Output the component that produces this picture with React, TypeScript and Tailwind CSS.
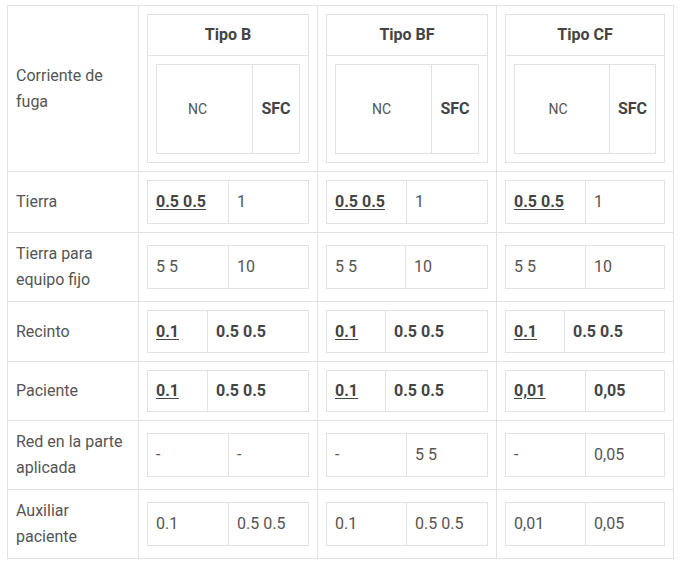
import React from "react";

type Cell = { t: string; b?: boolean; u?: boolean };
type Row = { label: string[]; lh: number; cols: { w: number; a: Cell; c: Cell }[] };

const B = "border border-[#e2e2e2]";

const rows: Row[] = [
  {
    label: ["Tierra"],
    lh: 26,
    cols: [
      { w: 81, a: { t: "0.5 0.5", b: true, u: true }, c: { t: "1" } },
      { w: 80, a: { t: "0.5 0.5", b: true, u: true }, c: { t: "1" } },
      { w: 80, a: { t: "0.5 0.5", b: true, u: true }, c: { t: "1" } },
    ],
  },
  {
    label: ["Tierra para", "equipo fijo"],
    lh: 26,
    cols: [
      { w: 81, a: { t: "5 5" }, c: { t: "10" } },
      { w: 79, a: { t: "5 5" }, c: { t: "10" } },
      { w: 80, a: { t: "5 5" }, c: { t: "10" } },
    ],
  },
  {
    label: ["Recinto"],
    lh: 25,
    cols: [
      { w: 60, a: { t: "0.1", b: true, u: true }, c: { t: "0.5 0.5", b: true } },
      { w: 59, a: { t: "0.1", b: true, u: true }, c: { t: "0.5 0.5", b: true } },
      { w: 59, a: { t: "0.1", b: true, u: true }, c: { t: "0.5 0.5", b: true } },
    ],
  },
  {
    label: ["Paciente"],
    lh: 24,
    cols: [
      { w: 60, a: { t: "0.1", b: true, u: true }, c: { t: "0.5 0.5", b: true } },
      { w: 59, a: { t: "0.1", b: true, u: true }, c: { t: "0.5 0.5", b: true } },
      { w: 80, a: { t: "0,01", b: true, u: true }, c: { t: "0,05", b: true } },
    ],
  },
  {
    label: ["Red en la parte", "aplicada"],
    lh: 26,
    cols: [
      { w: 81, a: { t: "-" }, c: { t: "-" } },
      { w: 80, a: { t: "-" }, c: { t: "5 5" } },
      { w: 80, a: { t: "-" }, c: { t: "0,05" } },
    ],
  },
  {
    label: ["Auxiliar", "paciente"],
    lh: 26,
    cols: [
      { w: 81, a: { t: "0.1" }, c: { t: "0.5 0.5" } },
      { w: 80, a: { t: "0.1" }, c: { t: "0.5 0.5" } },
      { w: 80, a: { t: "0,01" }, c: { t: "0,05" } },
    ],
  },
];

function Txt({ c }: { c: Cell }) {
  return (
    <span
      className={
        (c.b ? "font-bold text-[#444] " : "text-[#555] ") +
        (c.u ? "underline underline-offset-2" : "")
      }
    >
      {c.t}
    </span>
  );
}

function Inner({ w, a, c, lh }: { w: number; a: Cell; c: Cell; lh: number }) {
  return (
    <table className={"w-full table-fixed border-collapse " + B}>
      <tbody>
        <tr>
          <td className={B + " px-2 py-2"} style={{ width: w, lineHeight: `${lh}px` }}>
            <Txt c={a} />
          </td>
          <td className={B + " px-2 py-2"} style={{ lineHeight: `${lh}px` }}>
            <Txt c={c} />
          </td>
        </tr>
      </tbody>
    </table>
  );
}

function Header({ title, nc, shift }: { title: string; nc: number; shift: number }) {
  return (
    <table className={"w-full table-fixed border-collapse " + B}>
      <tbody>
        <tr>
          <td className={B + " py-[7px] text-center font-bold text-[16px] leading-[26px] text-[#444]"}>
            {title}
          </td>
        </tr>
        <tr>
          <td className={B + " p-2"}>
            <table className={"w-full table-fixed border-collapse " + B}>
              <tbody>
                <tr>
                  <td
                    className={B + " h-[89px] text-center align-middle text-[14px] text-[#555]"}
                    style={{ width: nc, paddingRight: shift * 2 }}
                  >
                    NC
                  </td>
                  <td className={B + " h-[89px] text-center align-middle font-bold text-[16px] text-[#444]"}>
                    SFC
                  </td>
                </tr>
              </tbody>
            </table>
          </td>
        </tr>
      </tbody>
    </table>
  );
}

export default function App() {
  return (
    <div
      className="bg-white w-[688px] h-[570px] pl-[7px] pt-[5px]"
      style={{ fontFamily: "Roboto, 'Liberation Sans', sans-serif" }}
    >
      <table className={"table-fixed border-collapse w-[666px] text-[16px] " + B}>
        <colgroup>
          <col className="w-[131px]" />
          <col className="w-[179px]" />
          <col className="w-[179px]" />
          <col className="w-[177px]" />
        </colgroup>
        <tbody>
          <tr>
            <td className={B + " px-2 align-middle leading-[26px] text-[#555]"}>
              Corriente de
              <br />
              fuga
            </td>
            <td className={B + " p-2"}>
              <Header title="Tipo B" nc={96} shift={7} />
            </td>
            <td className={B + " p-2"}>
              <Header title="Tipo BF" nc={96} shift={2} />
            </td>
            <td className={B + " p-2"}>
              <Header title="Tipo CF" nc={95} shift={4} />
            </td>
          </tr>
          {rows.map((r, i) => (
            <tr key={i}>
              <td className={B + " px-2 py-2 align-middle leading-[26px] text-[#555]"}>
                {r.label.map((l, j) => (
                  <React.Fragment key={j}>
                    {j > 0 && <br />}
                    {l}
                  </React.Fragment>
                ))}
              </td>
              {r.cols.map((c, j) => (
                <td key={j} className={B + " p-2 align-middle"}>
                  <Inner w={c.w} a={c.a} c={c.c} lh={r.lh} />
                </td>
              ))}
            </tr>
          ))}
        </tbody>
      </table>
    </div>
  );
}
